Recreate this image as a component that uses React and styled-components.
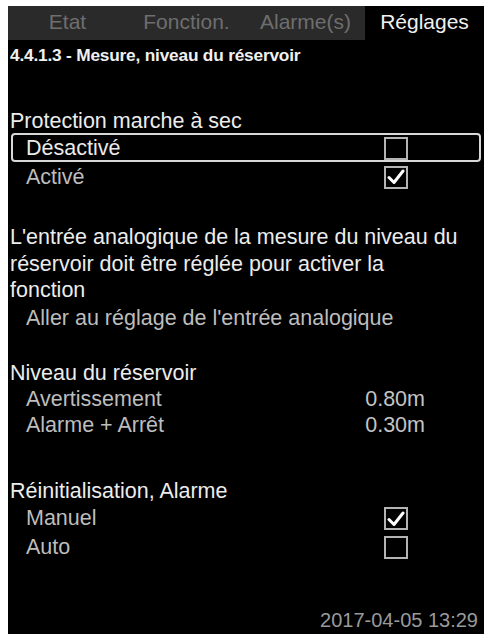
import React from "react";
import styled, { createGlobalStyle } from "styled-components";

const Global = createGlobalStyle`
  html, body { margin: 0; padding: 0; background: #fff; }
  * { box-sizing: border-box; }
`;

const Frame = styled.div`
  width: 484px;
  height: 634px;
  padding: 6px 0 0 8px;
  background: #fff;
  overflow: hidden;
`;

const Screen = styled.div`
  width: 476px;
  height: 628px;
  background: #000;
  display: flex;
  flex-direction: column;
  font-family: "Liberation Sans", Arial, sans-serif;
  color: #e4e4e4;
`;

const TabBar = styled.div`
  display: flex;
  height: 34px;
  background: #2a2a2a;
`;

const Tab = styled.div`
  flex: 1;
  display: flex;
  align-items: center;
  justify-content: center;
  font-size: 21px;
  color: ${(p) => (p.$active ? "#f0f0f0" : "#6e6e6e")};
  background: ${(p) => (p.$active ? "#000" : "transparent")};
  padding-bottom: 2px;
`;

const Title = styled.div`
  height: 30px;
  display: flex;
  align-items: center;
  padding-left: 2px;
  font-size: 17.3px;
  font-weight: bold;
  color: #f0f0f0;
  letter-spacing: -0.2px;
`;

const Header = styled.div`
  height: 27px;
  display: flex;
  align-items: center;
  padding-left: 2px;
  padding-top: 3px;
  font-size: 21.5px;
  color: #ececec;
  margin-top: ${(p) => p.$gap || 0}px;
`;

const Row = styled.div`
  height: ${(p) => p.$h || 29}px;
  display: flex;
  align-items: center;
  margin: 0 3px;
  padding: 1px 51px 0 13px;
  font-size: 21.5px;
  color: ${(p) => (p.$selected ? "#eaeaea" : "#bdbdbd")};
  border: 2px solid ${(p) => (p.$selected ? "#d8d8d8" : "transparent")};
  border-radius: 4px;
`;

const Label = styled.span`
  flex: 1;
`;

const Value = styled.span`
  color: #c4c4c4;
  margin-right: 3px;
`;

const Paragraph = styled.div`
  margin-top: 33px;
  padding-left: 2px;
  font-size: 21.5px;
  line-height: 26.5px;
  color: #ececec;
`;

const Box = styled.span`
  width: 24px;
  height: 23px;
  margin-right: 20px;
  border: 2px solid #b4b4b4;
  display: flex;
  align-items: center;
  justify-content: center;
`;

const DateLine = styled.div`
  margin-top: auto;
  height: 28px;
  display: flex;
  align-items: center;
  justify-content: flex-end;
  padding-right: 6px;
  font-size: 20px;
  color: #9a9a9a;
`;

const Check = ({ on }) => (
  <Box>
    {on && (
      <svg width="18" height="16" viewBox="0 0 18 16">
        <polyline
          points="2,8.5 7,13.5 16,2"
          fill="none"
          stroke="#ffffff"
          strokeWidth="3"
          strokeLinecap="round"
          strokeLinejoin="round"
        />
      </svg>
    )}
  </Box>
);

export default function App() {
  return (
    <>
      <Global />
      <Frame>
        <Screen>
          <TabBar>
            <Tab>Etat</Tab>
            <Tab>Fonction.</Tab>
            <Tab>Alarme(s)</Tab>
            <Tab $active>Réglages</Tab>
          </TabBar>
          <Title>4.4.1.3 - Mesure, niveau du réservoir</Title>

          <Header $gap={36}>Protection marche à sec</Header>
          <Row $selected>
            <Label>Désactivé</Label>
            <Check on={false} />
          </Row>
          <Row>
            <Label>Activé</Label>
            <Check on />
          </Row>

          <Paragraph>
            L'entrée analogique de la mesure du niveau du
            <br />
            réservoir doit être réglée pour activer la
            <br />
            fonction
          </Paragraph>
          <Row $h={28}>
            <Label>Aller au réglage de l'entrée analogique</Label>
          </Row>

          <Header $gap={27}>Niveau du réservoir</Header>
          <Row $h={26}>
            <Label>Avertissement</Label>
            <Value>0.80m</Value>
          </Row>
          <Row $h={26}>
            <Label>Alarme + Arrêt</Label>
            <Value>0.30m</Value>
          </Row>

          <Header $gap={39}>Réinitialisation, Alarme</Header>
          <Row>
            <Label>Manuel</Label>
            <Check on />
          </Row>
          <Row>
            <Label>Auto</Label>
            <Check on={false} />
          </Row>

          <DateLine>2017-04-05 13:29</DateLine>
        </Screen>
      </Frame>
    </>
  );
}
